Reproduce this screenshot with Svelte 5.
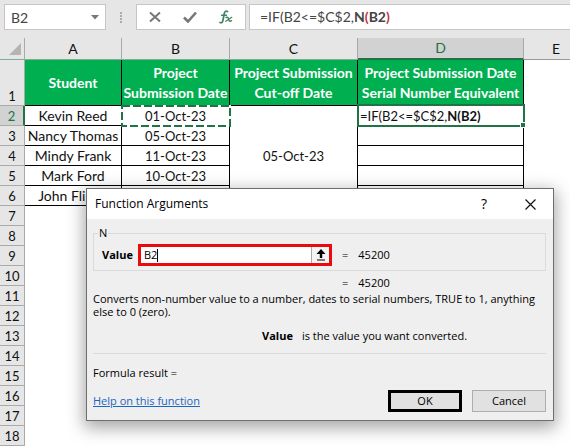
<script lang="ts">

    type Row = {
        student: string;
        submitted: string;
    }

    const columns = ["A", "B", "C", "D", "E"];

    const rows: Row[] = [
        { student: "Kevin Reed", submitted: "01-Oct-23" },
        { student: "Nancy Thomas", submitted: "05-Oct-23" },
        { student: "Mindy Frank", submitted: "11-Oct-23" },
        { student: "Mark Ford", submitted: "10-Oct-23" },
        { student: "John Flinch", submitted: "" },
    ];

    const emptyRows = Array.from({ length: 12 }, (_, i) => i + 7);

    let cellName = $state("B2");
    let argument = $state("B2");
    let open = $state(true);

    const close = () => {
        open = false;
    }

</script>

<div class="sheet">
    <div class="formula-bar">
        <div class="name-box">
            <input type="text" aria-label="Name Box" bind:value={cellName}>
            <button aria-label="Cell names">
                <svg width="8" height="5" viewBox="0 0 8 5"><path d="M0 0h8L4 4.5z" fill="#777" /></svg>
            </button>
        </div>
        <div class="grip"><i></i><i></i><i></i><i></i></div>
        <div class="tools">
            <button aria-label="Cancel entry">
                <svg width="12" height="12" viewBox="0 0 12 12"><path d="M1 1.5l10 9M11 1.5l-10 9" stroke="#777" stroke-width="2" fill="none" /></svg>
            </button>
            <button aria-label="Enter">
                <svg width="14" height="12" viewBox="0 0 14 12"><path d="M1 6.500l4 4L13 1.500" stroke="#777" stroke-width="2.600" fill="none" /></svg>
            </button>
            <button aria-label="Insert function">
                <svg width="14" height="14" viewBox="0 0 14 14" fill="none" stroke="#3d8360" stroke-linecap="round">
                    <path d="M8.500 1.600C6.800.6 5.700 1.400 5.300 3.500L3.900 10.500C3.500 12.500 2.500 13.200 1 12.500" stroke-width="1.700" />
                    <path d="M2.500 5.200h5" stroke-width="1.400" />
                    <path d="M7 7.500c2-1 2.300.5 2.800 2.200s1.200 2 2.700 1" stroke-width="1.400" />
                    <path d="M12.800 7.300L6.700 11.200" stroke-width="1.200" />
                </svg>
            </button>
        </div>
        <div class="formula" role="textbox" aria-label="Formula" tabindex="0" contenteditable="true">=IF(B2&lt;=$C$2,<b>N<em>(</em>B2<em>)</em></b></div>
    </div>

    <div class="grid-area">
        <table class="grid">
            <colgroup>
                <col class="col-head"><col class="col-a"><col class="col-b"><col class="col-c"><col class="col-d"><col>
            </colgroup>
            <thead>
                <tr>
                    <th class="corner" aria-label="Select all">
                        <svg width="12" height="12" viewBox="0 0 12 12"><path d="M12 0v12H0z" fill="#b4b4b4" /></svg>
                    </th>
                    {#each columns as column (column)}
                        <th class:active={column == "D"}>{column}</th>
                    {/each}
                </tr>
            </thead>
            <tbody>
                <tr class="titles">
                    <th>1</th>
                    <td>Student</td>
                    <td>Project<br>Submission Date</td>
                    <td>Project Submission<br>Cut-off Date</td>
                    <td>Project Submission Date<br>Serial Number Equivalent</td>
                    <td class="blank"></td>
                </tr>
                {#each rows as row, i (row.student)}
                    <tr>
                        <th class:active={i == 0}>{i + 2}</th>
                        <td class="data">{row.student}</td>
                        <td class="data date" class:copied={i == 0}>
                            {row.submitted}
                            {#if i == 0}
                                <svg class="ants" width="110" height="22" viewBox="0 0 110 22">
                                    <rect x="1" y="1" width="108" height="20" fill="none" stroke="#fff" stroke-width="2" />
                                    <rect x="1" y="1" width="108" height="20" fill="none" stroke="#217346" stroke-width="2" stroke-dasharray="8 3" />
                                </svg>
                            {/if}
                        </td>
                        {#if i == 0}
                            <td class="data date" rowspan="5">05-Oct-23</td>
                            <td class="data entry">=IF(B2&lt;=$C$2,<b>N(B2)</b><span class="selection"></span></td>
                        {:else}
                            <td class="data"></td>
                        {/if}
                        <td></td>
                    </tr>
                {/each}
                {#each emptyRows as n (n)}
                    <tr>
                        <th>{n}</th>
                        <td colspan="5"></td>
                    </tr>
                {/each}
            </tbody>
        </table>

        {#if open}
            <div class="dialog" role="dialog" aria-labelledby="dialog-title">
                <div class="title-bar">
                    <span id="dialog-title">Function Arguments</span>
                    <button class="help">?</button>
                    <button aria-label="Close" onclick={close}>
                        <svg width="11" height="11" viewBox="0 0 11 11"><path d="M.5.5l10 10M10.500.5l-10 10" stroke="#111" stroke-width="1.200" /></svg>
                    </button>
                </div>
                <div class="dialog-body">
                    <fieldset>
                        <legend>N</legend>
                        <label for="argument">Value</label>
                        <div class="ref-box">
                            <div class="ref-text">
                                <input id="argument" type="text" size="1" bind:value={argument}>
                                <span class="caret"></span>
                            </div>
                            <button aria-label="Collapse dialog">
                                <svg width="10" height="12" viewBox="0 0 10 12"><path d="M5 0l4.500 5H6.200v4H3.800V5H.5zM1 10.500h8v1H1z" fill="#000" /></svg>
                            </button>
                        </div>
                        <span class="value"><span>=</span>45200</span>
                    </fieldset>
                    <div class="result"><span class="value"><span>=</span>45200</span></div>
                    <p class="about">Converts non-number value to a number, dates to serial numbers, TRUE to 1, anything else to 0 (zero).</p>
                    <p class="hint"><b>Value</b>is the value you want converted.</p>
                    <hr>
                    <p class="formula-result">Formula result =</p>
                    <div class="footer">
                        <a href="#help">Help on this function</a>
                        <button class="ok" onclick={close}>OK</button>
                        <button class="cancel" onclick={close}>Cancel</button>
                    </div>
                </div>
            </div>
        {/if}
    </div>
</div>

<style>
    :global(body) {
        margin: 0;
        background: #fff;
    }
    .sheet {
        font-family: Lato, "Liberation Sans", sans-serif;
        font-size: 14px;
        color: #111;
        overflow: hidden;
    }
    button {
        border: none;
        padding: 0;
        background: none;
        font: inherit;
        color: inherit;
    }
    input {
        border: none;
        outline: none;
        padding: 0;
        background: none;
        font: inherit;
        color: inherit;
        min-width: 0;
    }
    svg {
        display: block;
    }

    .formula-bar {
        display: flex;
        height: 26px;
        padding: 4px 0 8px 4px;
        background: #e6e6e6;
        color: #444;
    }
    .name-box, .tools, .formula {
        box-sizing: border-box;
        border: 1px solid #c6c6c6;
        background: #fff;
    }
    .name-box {
        display: flex;
        align-items: center;
        width: 102px;
        padding: 0 6px;
        input {
            flex: 1;
        }
    }
    .grip {
        display: flex;
        flex-direction: column;
        justify-content: center;
        align-items: center;
        gap: 1px;
        width: 30px;
        i {
            width: 2px;
            height: 2px;
            background: #aaa;
        }
    }
    .tools {
        display: flex;
        align-items: center;
        justify-content: space-between;
        width: 110px;
        padding: 0 12px;
    }
    .formula {
        flex: 1;
        margin-left: 3px;
        padding-left: 10px;
        border-right: none;
        line-height: 24px;
        outline: none;
        em {
            font-style: normal;
            color: #c8323c;
        }
    }

    .grid-area {
        position: relative;
    }
    .grid {
        width: 100%;
        min-width: 588px;
        table-layout: fixed;
        border-collapse: separate;
        border-spacing: 0;
        th, td {
            box-sizing: border-box;
            height: 20px;
            padding: 0;
            line-height: 18px;
            white-space: nowrap;
        }
        th {
            border-right: 1px solid #aaa;
            border-bottom: 1px solid #aaa;
            background: #e6e6e6;
            font-weight: normal;
        }
        th.active {
            background: #d2d2d2;
            color: #217346;
        }
        tbody th {
            font-size: 13px;
        }
        tbody th.active {
            border-right: 2px solid #217346;
        }
        thead th {
            height: 22px;
            border-bottom: 1px solid #7fae95;
        }
        thead th.active {
            border-bottom: 2px solid #217346;
        }
        thead th:last-child {
            border-right: none;
            border-bottom-color: #999;
        }
    }
    .col-head { width: 25px; }
    .col-a { width: 97px; }
    .col-b { width: 108px; }
    .col-c { width: 128px; }
    .col-d { width: 166px; }
    .corner svg {
        margin-left: 9px;
    }
    .titles {
        th {
            height: 46px;
            vertical-align: bottom;
        }
        td {
            border-right: 1px solid #000;
            border-bottom: 1px solid #000;
            background: #00b050;
            color: #fff;
            font-weight: bold;
            line-height: 20px;
            text-align: center;
        }
        td.blank {
            border: none;
            background: none;
        }
    }
    .data {
        position: relative;
        border-right: 1px solid #000;
        border-bottom: 1px solid #000;
        text-align: center;
    }
    .date, .entry {
        font-size: 13px;
    }
    .copied, .entry {
        z-index: 1;
    }
    .grid .entry {
        padding-left: 2px;
        text-align: left;
    }
    .ants {
        position: absolute;
        top: -1px;
        left: -1px;
    }
    .selection {
        position: absolute;
        inset: -2px -2px -2px -1px;
        border: 2px solid #217346;
    }
    .selection::after {
        content: "";
        position: absolute;
        right: -3px;
        bottom: -3px;
        width: 4px;
        height: 4px;
        border: 1px solid #fff;
        background: #217346;
    }

    .dialog {
        position: absolute;
        z-index: 2;
        top: 150px;
        left: 86px;
        right: 16px;
        border: 1px solid #6e6e6e;
        background: #efefef;
        box-shadow: 0 5px 16px 2px rgba(0, 0, 0, 0.35);
        font-family: "Open Sans", "Noto Sans", sans-serif;
        font-size: 11px;
        line-height: 14px;
        color: #000;
        p {
            margin: 0;
        }
    }
    .title-bar {
        display: flex;
        align-items: center;
        height: 30px;
        padding: 0 17px 0 8px;
        background: #fff;
        font-size: 12px;
        span {
            flex: 1;
        }
        .help {
            margin-right: 38px;
            font-size: 14px;
        }
    }
    .dialog-body {
        padding: 7px 7px 8px 6px;
    }
    fieldset {
        display: flex;
        align-items: center;
        min-width: 0;
        height: 43px;
        box-sizing: content-box;
        margin: 0;
        padding: 0 0 0 8px;
        border: 1px solid #dadada;
        legend {
            margin-left: -4px;
            padding: 0 1px;
        }
        label {
            width: 36px;
            font-weight: bold;
        }
    }
    .ref-box {
        box-sizing: border-box;
        display: flex;
        width: 194px;
        height: 22px;
        border: 3px solid #e80c0c;
        background: #fff;
        button {
            display: flex;
            align-items: center;
            justify-content: center;
            width: 18px;
            border-left: 1px solid #aaa;
            background: #f4f4f4;
        }
    }
    .ref-text {
        flex: 1;
        display: flex;
        align-items: center;
        padding-left: 3px;
        input {
            width: 13px;
        }
    }
    .caret {
        width: 1px;
        height: 13px;
        background: #000;
    }
    .value {
        display: flex;
        gap: 10px;
        margin-left: 10px;
    }
    .result {
        display: flex;
        padding: 5px 0 2px 239px;
    }
    .about {
        line-height: 13px;
    }
    .hint {
        display: flex;
        gap: 9px;
        padding: 11px 0 0 169px;
    }
    hr {
        margin: 10px 0 12px;
        border: none;
        border-top: 1px solid #dadada;
    }
    .footer {
        display: flex;
        align-items: center;
        gap: 10px;
        padding-top: 10px;
        a {
            flex: 1;
            color: #1b66c0;
        }
        button {
            box-sizing: border-box;
            width: 74px;
            height: 22px;
            border: 1px solid #adadad;
            background: #e1e1e1;
        }
        .ok {
            border: 3px solid #000;
        }
    }
</style>
